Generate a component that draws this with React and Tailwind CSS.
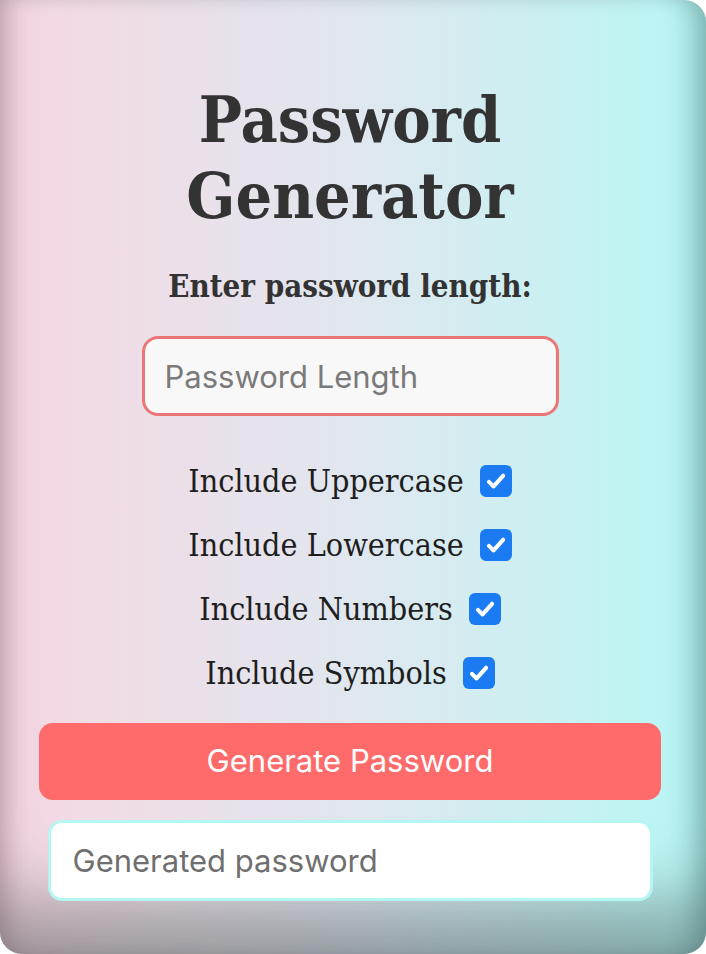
import { useState } from 'react';

const OPTIONS = [
  { key: 'upper', label: 'Include Uppercase' },
  { key: 'lower', label: 'Include Lowercase' },
  { key: 'numbers', label: 'Include Numbers' },
  { key: 'symbols', label: 'Include Symbols' },
];

const serif = { fontFamily: '"DejaVu Serif Condensed", "DejaVu Serif", serif' };
const sans = { fontFamily: 'Inter, "Noto Sans", sans-serif' };

function CheckBox({ checked, onChange }) {
  return (
    <button
      type="button"
      onClick={onChange}
      className={`w-8 h-8 shrink-0 rounded-[6px] flex items-center justify-center ${checked ? 'bg-[#1a7bf2]' : 'bg-white border-2 border-gray-400'}`}
    >
      {checked && (
        <svg viewBox="0 0 24 24" className="w-[26px] h-[26px]" fill="none" stroke="white" strokeWidth="3.8" strokeLinecap="round" strokeLinejoin="round">
          <path d="M5.5 12.8l4.3 4.2L18.5 7.2" />
        </svg>
      )}
    </button>
  );
}

export default function App() {
  const [length, setLength] = useState('');
  const [opts, setOpts] = useState({ upper: true, lower: true, numbers: true, symbols: true });
  const [result, setResult] = useState('');

  const generate = () => {
    let chars = '';
    if (opts.upper) chars += 'ABCDEFGHIJKLMNOPQRSTUVWXYZ';
    if (opts.lower) chars += 'abcdefghijklmnopqrstuvwxyz';
    if (opts.numbers) chars += '0123456789';
    if (opts.symbols) chars += '!@#$%^&*()_+-=';
    const n = parseInt(length, 10) || 12;
    let out = '';
    for (let i = 0; i < n && chars; i++) out += chars[Math.floor(Math.random() * chars.length)];
    setResult(out);
  };

  return (
    <div className="w-[706px] h-[954px] bg-white overflow-hidden">
      <div className="w-full h-full rounded-tr-[22px] rounded-b-[22px] bg-gradient-to-r from-[#f6d7e3] via-[#e0e7ef] to-[#b6f7f4] shadow-[inset_0_-80px_70px_-30px_rgba(60,70,70,0.45),inset_-22px_0_24px_-12px_rgba(40,90,90,0.35),inset_18px_0_22px_-12px_rgba(90,40,60,0.25)] flex flex-col items-center pt-[82px] pr-[6px]">
        <h1 className="text-[64px] leading-[76px] font-bold text-[#333] text-center" style={serif}>
          Password<br />Generator
        </h1>

        <p className="mt-[34px] text-[31px] leading-[36px] font-bold text-[#333]" style={serif}>
          Enter password length:
        </p>

        <input
          type="number"
          value={length}
          onChange={e => setLength(e.target.value)}
          placeholder="Password Length"
          className="mt-[32px] w-[417px] h-[80px] rounded-[16px] border-[3px] border-[#ec7676] bg-[#f8f8f8] px-[20px] text-[31px] text-[#333] placeholder-[#7a7a7a] focus:outline-none"
          style={sans}
        />

        <div className="mt-[33px] flex flex-col">
          {OPTIONS.map(o => (
            <div key={o.key} className="h-16 flex items-center justify-center gap-4">
              <span className="text-[32px] text-[#1e1e1e]" style={serif}>{o.label}</span>
              <CheckBox checked={opts[o.key]} onChange={() => setOpts(p => ({ ...p, [o.key]: !p[o.key] }))} />
            </div>
          ))}
        </div>

        <button
          onClick={generate}
          className="mt-[18px] w-[622px] h-[77px] rounded-[14px] bg-[#ff6b6b] text-white text-[31px]"
          style={sans}
        >
          Generate Password
        </button>

        <input
          readOnly
          value={result}
          placeholder="Generated password"
          className="mt-[20px] w-[605px] h-[81px] rounded-[14px] border-[3px] border-[#b4f6f1] bg-white px-[22px] text-[31px] text-[#333] placeholder-[#6f6f6f] focus:outline-none"
          style={sans}
        />
      </div>
    </div>
  );
}
